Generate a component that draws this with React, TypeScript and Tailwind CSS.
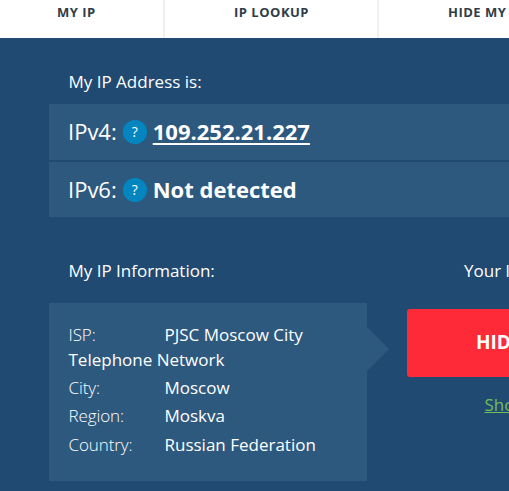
function Help() {
  return <span className="flex h-6 w-6 items-center justify-center rounded-full bg-[#0386bf] text-[14px] leading-none">?</span>;
}

const rows = [
  ["City:", "Moscow"],
  ["Region:", "Moskva"],
  ["Country:", "Russian Federation"],
];

export default function App() {
  return (
    <div className="h-[491px] w-[509px] overflow-hidden bg-[#204a72] font-['Open_Sans',sans-serif] text-white">
      <nav className="flex h-[38px] w-[600px] bg-white text-[13px] font-bold leading-6 tracking-[0.5px] text-[#2f3d49]">
        <div className="w-[165px] shrink-0 border-r-2 border-[#f0f0f0] pl-[57px]">MY IP</div>
        <div className="w-[214px] shrink-0 border-r-2 border-[#f0f0f0] pl-[69px]">IP LOOKUP</div>
        <div className="whitespace-nowrap pl-[69px]">HIDE MY IP</div>
      </nav>
      <main className="w-[800px] pl-[49px]">
        <h2 className="h-[66px] pl-[19.5px] pt-8 text-[17px] leading-6">My IP Address is:</h2>
        <div className="flex h-14 items-center gap-[6px] bg-[#2d597f] pl-[19px] text-[22px]">
          <span className="-mt-px">IPv4:</span><Help /><b className="-mt-0.5 underline decoration-2 underline-offset-[3px]">109.252.21.227</b>
        </div>
        <div className="mt-[2px] flex h-[55px] items-center gap-[6px] bg-[#2d597f] pl-[19px] text-[22px]">
          <span>IPv6:</span><Help /><b>Not detected</b>
        </div>
        <div className="flex">
          <section className="w-[318px]">
            <h2 className="h-[86px] pl-[19.5px] pt-[42px] text-[17px] leading-6">My IP Information:</h2>
            <div className="relative h-[178px] bg-[#2d597f] pl-[19.5px] pt-[19px] text-[17px]">
              <p className="w-[250px] leading-[25px]"><span className="inline-block w-24 font-light tracking-[-0.1px]">ISP:</span>PJSC Moscow City Telephone Network</p>
              <dl className="pt-[2px]">
                {rows.map(([label, value]) => (
                  <div key={label} className="flex h-7 items-center last:h-[30px]"><dt className="w-24 font-light tracking-[-0.1px]">{label}</dt><dd>{value}</dd></div>
                ))}
              </dl>
              <span className="absolute left-full top-6 h-0 w-0 border-y-[22px] border-l-[22px] border-y-transparent border-l-[#2d597f]" />
            </div>
          </section>
          <section className="ml-10 w-[360px]">
            <h2 className="h-[92px] whitespace-nowrap pl-[57px] pt-[42px] text-[17px] leading-6">Your location may be exposed!</h2>
            <button className="block h-[68px] w-full rounded-[3px] bg-[#ff2a38] pb-px pl-[69px] text-left text-[19px] font-bold">HIDE MY IP</button>
            <a className="mt-4 block pl-[77.5px] text-[17px] leading-6 text-[#6fbf57] underline">Show complete details</a>
          </section>
        </div>
      </main>
    </div>
  );
}
